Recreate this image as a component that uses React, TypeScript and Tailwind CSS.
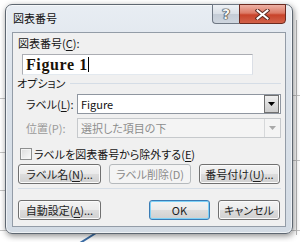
import type { ReactNode } from "react"

const jp = "font-['Noto_Sans_CJK_JP','Noto_Sans',sans-serif] [font-feature-settings:'palt'] text-[11px] leading-[14px]"

function U({ children }: { children: ReactNode }) {
  return <span className="underline underline-offset-[2px] decoration-[1px]">{children}</span>
}

function Btn({
  w,
  ml,
  disabled,
  primary,
  children,
}: {
  w: string
  ml?: string
  disabled?: boolean
  primary?: boolean
  children: ReactNode
}) {
  let look =
    "border-[#707070] text-[#1e1e1e] bg-[linear-gradient(180deg,#f3f3f3_0%,#ebebeb_48%,#dddddd_52%,#d0d0d0_100%)] shadow-[inset_0_0_0_1px_#fbfbfb]"
  if (disabled) look = "border-[#b5b9bc] text-[#8a8a8a] bg-[#f4f4f4]"
  if (primary)
    look =
      "border-[#3b7cb5] text-[#1e1e1e] bg-[linear-gradient(180deg,#f3f3f3_0%,#ebebeb_48%,#dddddd_52%,#d0d0d0_100%)] shadow-[inset_0_0_0_1px_#7ed1f7]"
  return (
    <div className={`${w} ${ml ?? ""} h-[20px] flex items-center justify-center border rounded-[3px] ${look}`}>
      {children}
    </div>
  )
}

function Select({ text, disabled }: { text: string; disabled?: boolean }) {
  return (
    <div
      className={`w-[204px] h-[20px] flex items-center border ${
        disabled ? "border-[#c6c9cc] bg-[#f4f4f4] text-[#8d8d8d]" : "border-[#8f96a0] bg-white text-[#111]"
      }`}
    >
      <span className="flex-1 pl-[3px]">{text}</span>
      {disabled ? (
        <div className="w-[16px] h-[18px] border-l border-[#d6d8da] flex items-center justify-center">
          <svg width="7" height="4" viewBox="0 0 7 4">
            <path d="M0 0h7L3.5 4z" fill="#a9a9a9" />
          </svg>
        </div>
      ) : (
        <div className="w-[15px] h-[18px] mr-[1px] border border-[#707070] bg-[linear-gradient(180deg,#f0f0f0,#dcdcdc_50%,#cdcdcd)] flex items-center justify-center">
          <svg width="7" height="4" viewBox="0 0 7 4">
            <path d="M0 0h7L3.5 4z" fill="#000" />
          </svg>
        </div>
      )}
    </div>
  )
}

export default function App() {
  return (
    <div className={`w-[300px] h-[242px] relative overflow-hidden bg-white ${jp}`}>
      {/* document behind the dialog */}
      <svg className="absolute inset-0" width="300" height="242">
        <g stroke="#c4c4c4" strokeWidth="1">
          <path d="M0 98.5h8M0 152.5h8M0 190.5h8M0 230.5h8" />
          <path d="M290 95.5h10M290 160.5h10M290 230.5h10" />
        </g>
        <path d="M296.5 20v215" stroke="#b8b8b8" />
        <path d="M80 243L96 233" stroke="#3d6fa8" strokeWidth="2" />
      </svg>

      <div className="relative ml-[5px] mt-[4px] w-[288px] h-[230px] rounded-[7px] border border-[#5e6771] bg-[linear-gradient(180deg,#e8edf3_0%,#dbe2ea_35%,#d3dbe4_100%)] shadow-[1px_2px_6px_rgba(0,0,0,0.45),inset_0_0_0_1px_rgba(255,255,255,0.6)]">
        <div className="h-[27px] flex items-start justify-between">
          <span className="pl-[7px] pt-[6px] text-[#111]">図表番号</span>
          <div className="flex -mt-[1px] mr-[6px]">
            <div className="w-[27px] h-[20px] border border-[#6f7884] border-r-0 rounded-bl-[4px] bg-[linear-gradient(180deg,#eef1f5,#d9dfe6_50%,#c4ccd6_52%,#cfd6df)] flex items-center justify-center">
              <span className="font-['DejaVu_Sans',sans-serif] font-bold text-[14px] leading-[14px] text-[#f4f4f4] [text-shadow:0_0_1px_#2e2e2e,0_0_1px_#2e2e2e,0_0_1px_#2e2e2e,0_0_1px_#2e2e2e]">
                ?
              </span>
            </div>
            <div className="w-[47px] h-[20px] border border-[#6b2a20] rounded-br-[4px] bg-[linear-gradient(180deg,#eeb2a6_0%,#dc7a66_45%,#c8432a_55%,#d2624a_100%)] flex items-center justify-center">
              <svg width="15" height="11" viewBox="0 0 15 11">
                <path d="M2.5 1.5L12.5 9.5M12.5 1.5L2.5 9.5" stroke="#5a2a22" strokeWidth="4" strokeLinecap="square" />
                <path d="M2.5 1.5L12.5 9.5M12.5 1.5L2.5 9.5" stroke="#fff" strokeWidth="2" strokeLinecap="square" />
              </svg>
            </div>
          </div>
        </div>

        <div className="mx-[6px] h-[195px] border border-[#939ca7] bg-[#f0f0f0] text-[#141414]">
          <div className="pl-[5px] pt-[3px]">
            図表番号(<U>C</U>):
          </div>

          <div className="ml-[9px] mt-[4px] w-[231px] h-[21px] border border-[#abadb3] border-b-[#e3e9ef] border-r-[#dbdfe6] bg-white flex items-center pl-[3px]">
            <span className="font-['Liberation_Serif',serif] font-bold text-[16px] leading-[18px] tracking-[0.6px] text-[#1a1208]">
              Figure 1
            </span>
            <span className="w-[1px] h-[15px] bg-black" />
          </div>

          <div className="mt-[1px] pl-[4px] flex items-center">
            <span>オプション</span>
            <div className="flex-1 ml-[5px] mr-[4px] h-[1px] bg-[#d5dde6]" />
          </div>

          <div className="mt-[4px] pl-[13px] flex items-center">
            <span className="w-[51px]">
              ラベル(<U>L</U>):
            </span>
            <Select text="Figure" />
          </div>

          <div className="mt-[4px] pl-[13px] flex items-center">
            <span className="w-[51px] text-[#9a9a9a]">位置(P):</span>
            <Select text="選択した項目の下" disabled />
          </div>

          <div className="mt-[9px] pl-[7px] flex items-center">
            <div className="w-[12px] h-[12px] border border-[#8e8f8f] bg-[linear-gradient(135deg,#dcdcdc,#fafafa)] shadow-[inset_0_0_0_1px_#f4f4f4]" />
            <span className="ml-[2px]">
              ラベルを図表番号から除外する(<U>E</U>)
            </span>
          </div>

          <div className="mt-[3px] pl-[5px] flex">
            <Btn w="w-[83px]">
              ラベル名(<U>N</U>)...
            </Btn>
            <Btn w="w-[82px]" ml="ml-[8px]" disabled>
              ラベル削除(D)
            </Btn>
            <Btn w="w-[81px]" ml="ml-[8px]">
              番号付け(<U>U</U>)...
            </Btn>
          </div>

          <div className="mt-[4px] ml-[5px] mr-[4px] h-[1px] bg-[#d5dde6]" />

          <div className="mt-[11px] pl-[5px] flex">
            <Btn w="w-[83px]">
              自動設定(<U>A</U>)...
            </Btn>
            <Btn w="w-[61px]" ml="ml-[48px]" primary>
              OK
            </Btn>
            <Btn w="w-[62px]" ml="ml-[8px]">
              キャンセル
            </Btn>
          </div>
        </div>
      </div>
    </div>
  )
}
